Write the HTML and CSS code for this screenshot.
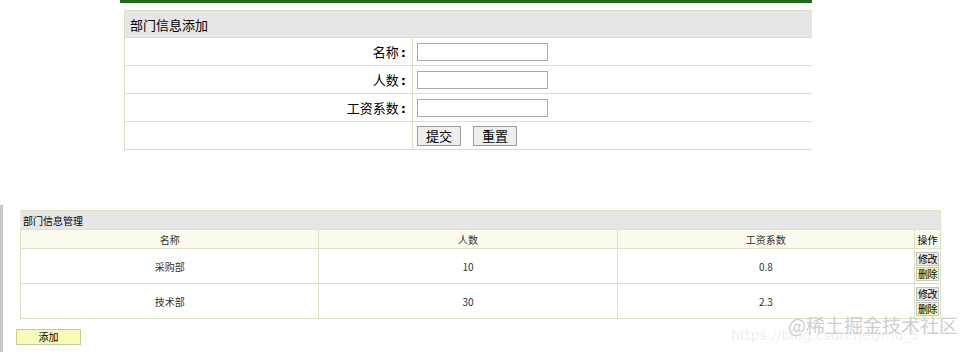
FILE: index.html
```html
<!DOCTYPE html>
<html lang="zh-CN">
  <head>
    <meta charset="UTF-8" />
    <title>部门信息</title>
    <link rel="stylesheet" href="styles.css">
  </head>
  <body>
    <div class="add-panel">
      <div class="top-bar"></div>
      <table class="add-table">
        <tr>
          <th colspan="2">部门信息添加</th>
        </tr>
        <tr>
          <td class="label">名称<b>:</b></td>
          <td class="field"><input type="text" name="name" /></td>
        </tr>
        <tr>
          <td class="label">人数<b>:</b></td>
          <td class="field"><input type="text" name="num" /></td>
        </tr>
        <tr>
          <td class="label">工资系数<b>:</b></td>
          <td class="field"><input type="text" name="rate" /></td>
        </tr>
        <tr>
          <td class="label"></td>
          <td class="field">
            <button type="submit" class="btn">提交</button>
            <button type="reset" class="btn btn-reset">重置</button>
          </td>
        </tr>
      </table>
    </div>

    <div class="manage-panel">
      <table class="list-table">
        <tr>
          <th colspan="4" class="caption">部门信息管理</th>
        </tr>
        <tr class="head">
          <td>名称</td>
          <td>人数</td>
          <td>工资系数</td>
          <td class="op">操作</td>
        </tr>
        <tr class="row">
          <td>采购部</td>
          <td>10</td>
          <td>0.8</td>
          <td class="op">
            <button class="op-btn">修改</button>
            <button class="op-btn del">删除</button>
          </td>
        </tr>
        <tr class="row">
          <td>技术部</td>
          <td>30</td>
          <td>2.3</td>
          <td class="op">
            <button class="op-btn">修改</button>
            <button class="op-btn del">删除</button>
          </td>
        </tr>
      </table>
      <button class="add-btn">添加</button>
      <div class="watermark">
        <span class="url">https://blog.csdn.net/m0_5</span>
        <span class="mark">@稀土掘金技术社区</span>
      </div>
    </div>
  </body>
</html>
```

FILE: styles.css
```css
body {
  margin: 0;
  background: #ffffff;
  font-family: "Noto Sans CJK SC", "DejaVu Sans", sans-serif;
  color: #000;
  position: relative;
  width: 961px;
  height: 352px;
  overflow: hidden;
}
.add-panel {
  margin-left: 120px;
  width: 692px;
}
.top-bar {
  height: 3px;
  background: #1f6a1c;
}
.add-table {
  margin: 7px 0 0 4px;
  width: 688px;
  border-collapse: collapse;
  font-size: 13px;
}
.add-table th {
  height: 26px;
  background: #e6e6e6;
  border: 1px solid #dcdfc4;
  border-right: none;
  text-align: left;
  font-weight: normal;
  font-size: 13px;
  padding: 0 0 0 5px;
}
.add-table td {
  height: 27px;
  border-bottom: 1px solid #dcdfc4;
  padding: 0;
}
.add-table td.label {
  width: 281px;
  border-left: 1px solid #dcdfc4;
  border-right: 1px solid #dcdfc4;
  text-align: right;
  padding-right: 6px;
}
.add-table td.label b {
  font-family: "DejaVu Sans", sans-serif;
  margin-left: 2px;
}
.add-table td.field {
  padding-left: 4px;
}
.add-table input {
  width: 127px;
  height: 14px;
  border: 1px solid #aaaaaa;
  padding: 1px;
  margin: 0;
  display: block;
}
.btn {
  font-family: inherit;
  font-size: 13px;
  width: 44px;
  height: 20px;
  padding: 0;
  line-height: 16px;
  background: #efefef;
  border: 1px solid #9a9a9a;
  margin: 0;
}
.btn-reset {
  margin-left: 9px;
}
.manage-panel {
  position: absolute;
  left: 0;
  top: 205px;
  width: 961px;
  height: 147px;
  border-left: 3px solid #c8c8c8;
  box-sizing: border-box;
}
.list-table {
  margin: 5px 0 0 17px;
  width: 921px;
  border-collapse: collapse;
  font-size: 10px;
}
.list-table td,
.list-table th {
  border: 1px solid #dde2c2;
  padding: 0;
}
.list-table .caption {
  background: #e6e6e6;
  height: 18px;
  text-align: left;
  font-weight: normal;
  padding-left: 2px;
  border-left-color: #eeeee4;
}
.list-table .head td {
  background: #fafaee;
  height: 18px;
  text-align: center;
  color: #333;
}
.list-table .row td {
  height: 34px;
  text-align: center;
  color: #333;
}
.list-table td:first-child {
  width: 298px;
}
.list-table td:nth-child(2) {
  width: 298px;
}
.list-table td:nth-child(3) {
  width: 297px;
}
.list-table td.op {
  width: 25px;
  color: #000;
}
.op-btn {
  display: block;
  margin: 0 auto;
  width: 23px;
  height: 14px;
  padding: 0;
  font-family: inherit;
  font-size: 10px;
  letter-spacing: -0.5px;
  line-height: 12px;
  white-space: nowrap;
  background: #e9e9e9;
  border: 1px solid #c4c4c4;
}
.op-btn.del {
  background: #f4fbb0;
  margin-top: 1px;
}
.add-btn {
  display: block;
  margin: 10px 0 0 13px;
  width: 65px;
  height: 16px;
  padding: 0;
  font-family: inherit;
  font-size: 10px;
  line-height: 14px;
  background: #f7fbb8;
  border: 1px solid #c8cb9a;
}
.watermark {
  position: absolute;
  left: 725px;
  top: 108px;
  width: 236px;
  height: 39px;
  white-space: nowrap;
}
.watermark .url {
  position: absolute;
  left: 3px;
  top: 12px;
  font-family: "DejaVu Sans", sans-serif;
  font-size: 14px;
  line-height: 20px;
  color: #f0f0f0;
}
.watermark .mark {
  position: absolute;
  left: 60px;
  top: 0;
  font-size: 19px;
  line-height: 24px;
  color: #cfcfcf;
}
```
